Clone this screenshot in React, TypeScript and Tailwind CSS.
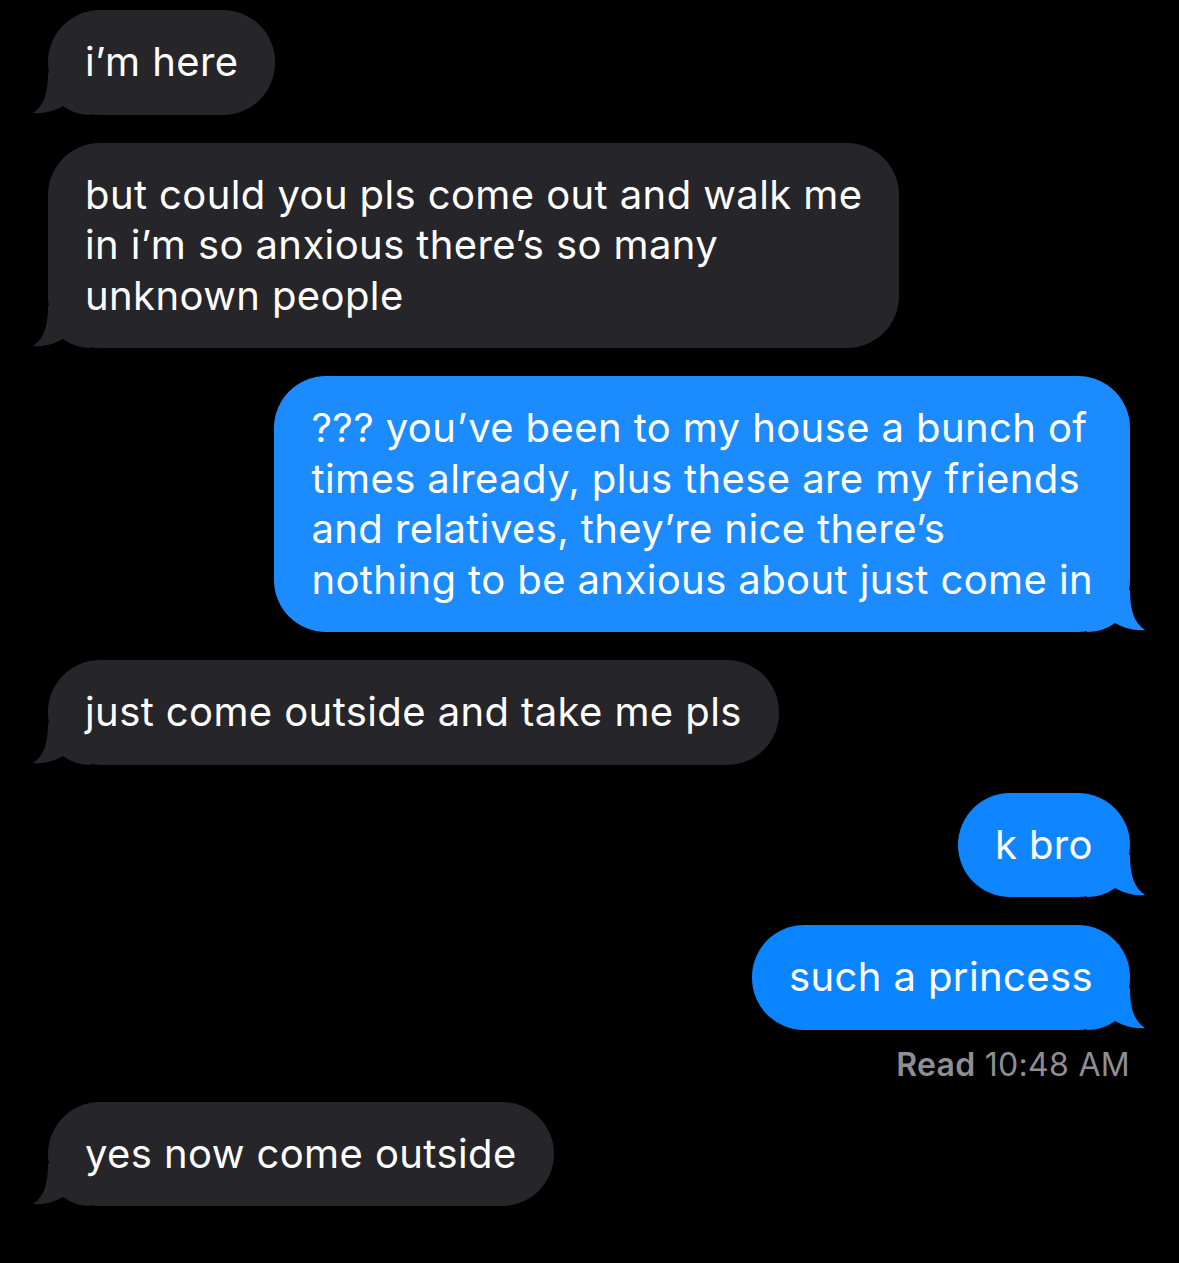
import React from 'react';

type Msg = {
  lines: string[];
  fromMe: boolean;
  color?: string;
};

const messages: Msg[] = [
  { lines: ['i’m here'], fromMe: false },
  {
    lines: ['but could you pls come out and walk me', 'in i’m so anxious there’s so many', 'unknown people'],
    fromMe: false,
  },
  {
    lines: [
      '??? you’ve been to my house a bunch of',
      'times already, plus these are my friends',
      'and relatives, they’re nice there’s',
      'nothing to be anxious about just come in',
    ],
    fromMe: true,
    color: '#1b8bfe',
  },
  { lines: ['just come outside and take me pls'], fromMe: false },
  { lines: ['k bro'], fromMe: true, color: '#0f86ff' },
  { lines: ['such a princess'], fromMe: true, color: '#0a84ff' },
];

const Tail: React.FC<{ fromMe: boolean; color: string }> = ({ fromMe, color }) => (
  <svg
    width="60"
    height="60"
    viewBox="0 0 60 60"
    className={
      fromMe
        ? 'absolute -right-[17px] bottom-0 -scale-x-100'
        : 'absolute -left-[17px] bottom-0'
    }
  >
    <path d="M17 18 C17 38 13 51 2 58 C13 59 23 56 32 51 C40 57 50 60 60 60 L60 18 Z" fill={color} />
  </svg>
);

const Bubble: React.FC<{ msg: Msg }> = ({ msg }) => {
  const color = msg.fromMe ? msg.color ?? '#0a84ff' : '#26252a';
  return (
    <div className={msg.fromMe ? 'flex justify-end' : 'flex justify-start'}>
      <div
        className="relative max-w-[870px] rounded-[52px] px-[37px] py-[27px] text-white"
        style={{ backgroundColor: color }}
      >
        <Tail fromMe={msg.fromMe} color={color} />
        <p className="relative whitespace-nowrap">
          {msg.lines.map((l, i) => (
            <React.Fragment key={i}>
              {i > 0 && <br />}
              {l}
            </React.Fragment>
          ))}
        </p>
      </div>
    </div>
  );
};

export default function App() {
  return (
    <div className="h-[1263px] w-full overflow-hidden bg-black pl-12 pr-[49px] pt-[10px] font-['Inter','Noto_Sans',sans-serif] text-[40px] leading-[50.5px] tracking-[0.4px]">
      <div className="flex flex-col gap-[28px]">
        {messages.map((m, i) => (
          <Bubble key={i} msg={m} />
        ))}
      </div>
      <div className="mt-[15px] text-right text-[32px] leading-[40px] tracking-[0.3px] text-[#8e8e93]">
        <span className="font-semibold">Read</span> 10:48 AM
      </div>
      <div className="mt-[17px]">
        <Bubble msg={{ lines: ['yes now come outside'], fromMe: false }} />
      </div>
    </div>
  );
}
